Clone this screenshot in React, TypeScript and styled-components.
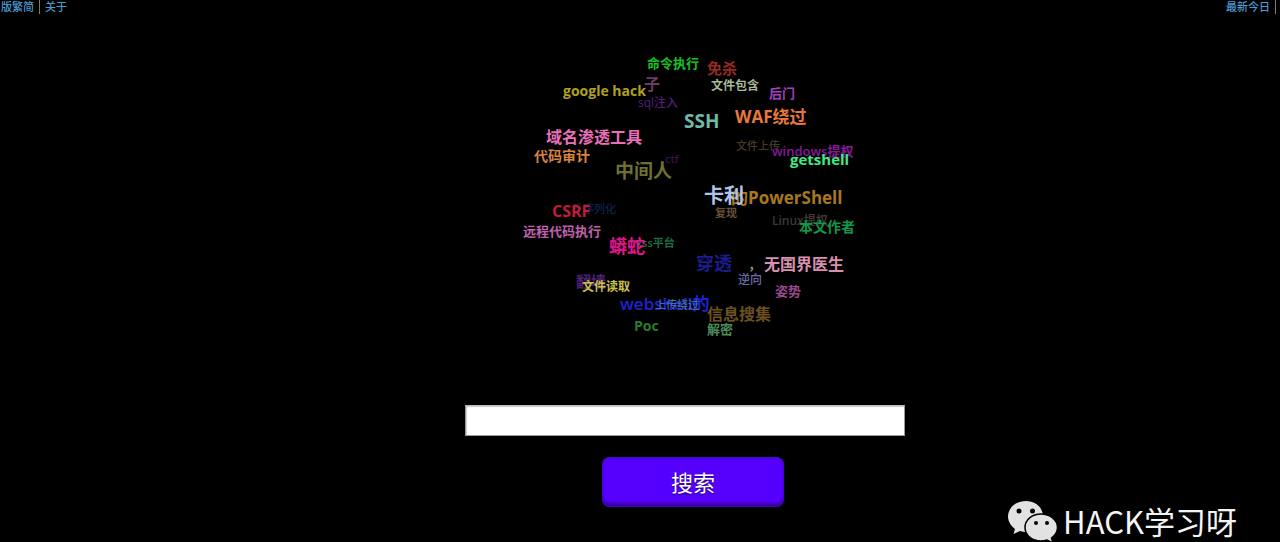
import React from "react";
import styled, { createGlobalStyle } from "styled-components";

const GlobalStyle = createGlobalStyle`
  * { box-sizing: border-box; }
  body {
    margin: 0;
    background: #000;
    font-family: "Open Sans", "Noto Sans CJK SC", sans-serif;
  }
`;

const Page = styled.div`
  position: relative;
  min-height: 100vh;
`;

const TopBar = styled.nav`
  display: flex;
  justify-content: space-between;
  padding: 0 4px 0 1px;
  height: 14px;
`;

const LinkGroup = styled.div`
  display: flex;
  align-items: center;
`;

const TopLink = styled.a`
  color: #4a9ad0;
  font-size: 11px;
  font-weight: 500;
  line-height: 14px;
  text-decoration: none;
`;

const Divider = styled.span`
  width: 1px;
  height: 14px;
  margin: 0 5px;
  background: #8a7468;
  &:last-child { margin-right: 0; }
`;

const Main = styled.main`
  display: flex;
  flex-direction: column;
  align-items: center;
  padding-left: 90px;
`;

const Cloud = styled.div`
  position: relative;
  width: 360px;
  height: 391px;
`;

const Tag = styled.a<{ $x: number; $y: number; $size: number; $color: string; $weight?: number }>`
  position: absolute;
  left: ${(p) => p.$x}px;
  top: ${(p) => p.$y}px;
  height: 24px;
  margin-top: -12px;
  color: ${(p) => p.$color};
  font-size: ${(p) => p.$size}px;
  font-weight: ${(p) => p.$weight ?? 700};
  line-height: 24px;
  white-space: nowrap;
  text-decoration: none;
`;

const SearchForm = styled.form`
  display: flex;
  flex-direction: column;
  align-items: center;
  gap: 21px;
`;

const SearchInput = styled.input`
  width: 440px;
  height: 31px;
  padding: 0 8px;
  border: 1px solid #999;
  border-top-color: #bbb;
  background: #fff;
  box-shadow: inset 1px 1px 1px #ccc;
  font-size: 16px;
`;

const SearchButton = styled.button`
  width: 182px;
  height: 50px;
  margin-left: 16px;
  padding: 0;
  border: 0;
  border-radius: 8px;
  background: #5500ff;
  box-shadow: inset 0 -4px 3px #3c00a8, inset 0 1px 2px #3c10b0;
  color: #fff;
  font-family: inherit;
  font-size: 22px;
  line-height: 32px;
  text-shadow: 0 1px 2px #200060;
`;

/* Watermark that floats over the bottom right corner of the page. */
const Watermark = styled.div`
  position: absolute;
  right: 43px;
  bottom: 0;
  display: flex;
  align-items: center;
  gap: 5px;
`;

const Brand = styled.span`
  color: #f4f4f4;
  font-family: "Noto Sans CJK SC", sans-serif;
  font-size: 31px;
  font-weight: 400;
  line-height: 42px;
`;

interface TagData {
  text: string;
  x: number;
  y: number;
  size: number;
  color: string;
  weight?: number;
}

// Listed from the back of the sphere to the front.
const tags: TagData[] = [
  { text: "ctf", x: 160, y: 145, size: 11, color: "#3a124a", weight: 600 },
  { text: "文件上传", x: 231, y: 132, size: 11, color: "#463c26", weight: 500 },
  { text: "反序列化", x: 67, y: 195, size: 11, color: "#10204e", weight: 500 },
  { text: "Linux提权", x: 267, y: 207, size: 12, color: "#3e3834", weight: 600 },
  { text: "sql注入", x: 133, y: 89, size: 12, color: "#541e7c", weight: 500 },
  { text: "xss平台", x: 131, y: 229, size: 11, color: "#1c7048", weight: 600 },
  { text: "复现", x: 210, y: 199, size: 11, color: "#6a5238" },
  { text: "逆向", x: 233, y: 266, size: 12, color: "#6c6cac", weight: 500 },
  { text: "windows提权", x: 267, y: 137, size: 13, color: "#86189a", weight: 600 },
  { text: "翻墙", x: 71, y: 267, size: 15, color: "#4e2074", weight: 700 },
  { text: "子", x: 139, y: 70, size: 16, color: "#6d3b66" },
  { text: "免杀", x: 202, y: 54, size: 15, color: "#962a22" },
  { text: "后门", x: 264, y: 79, size: 13, color: "#a040c0" },
  { text: "文件包含", x: 206, y: 72, size: 12, color: "#a8b897" },
  { text: "命令执行", x: 142, y: 49, size: 13, color: "#17c11f" },
  { text: "google hack", x: 58, y: 77, size: 14, color: "#b0a020" },
  { text: "SSH", x: 179, y: 107, size: 19, color: "#72b8a8" },
  { text: "WAF绕过", x: 230, y: 103, size: 17, color: "#e8783c" },
  { text: "域名渗透工具", x: 41, y: 123, size: 16, color: "#e870b8" },
  { text: "代码审计", x: 29, y: 142, size: 14, color: "#d88440" },
  { text: "中间人", x: 110, y: 157, size: 19, color: "#6e7030" },
  { text: "getshell", x: 285, y: 145, size: 15, color: "#42e886" },
  { text: "的PowerShell", x: 226, y: 184, size: 17, color: "#a87820" },
  { text: "卡利", x: 199, y: 182, size: 20, color: "#b0c4e8" },
  { text: "CSRF", x: 47, y: 197, size: 16, color: "#c41c34" },
  { text: "远程代码执行", x: 18, y: 217, size: 13, color: "#c060b0" },
  { text: "蟒蛇", x: 104, y: 232, size: 18, color: "#e0148c" },
  { text: "本文作者", x: 294, y: 213, size: 14, color: "#109848" },
  { text: "穿透", x: 191, y: 249, size: 18, color: "#1c1c90" },
  { text: "，", x: 243, y: 250, size: 13, color: "#8c9878" },
  { text: "无国界医生", x: 259, y: 250, size: 16, color: "#d890b0" },
  { text: "姿势", x: 270, y: 277, size: 13, color: "#9c4890" },
  { text: "文件读取", x: 77, y: 273, size: 12, color: "#c8c048" },
  { text: "webshell的", x: 115, y: 290, size: 17, color: "#2020d8", weight: 600 },
  { text: "上传绕过", x: 150, y: 291, size: 11, color: "#4070a8", weight: 500 },
  { text: "Poc", x: 129, y: 312, size: 14, color: "#2a7a30" },
  { text: "信息搜集", x: 202, y: 300, size: 16, color: "#6c5020" },
  { text: "解密", x: 202, y: 315, size: 13, color: "#4c8c5c" },
];

const ChatLogo = () => (
  <svg width="50" height="42" viewBox="0 0 50 42" aria-hidden="true">
    <path fill="#e2e2e2" d="M18 1C8 1 0 8 0 16.500C0 21.500 3 26 7 29L5.500 34L12 31Q15 32 18 32C28 32 35 25 35 16.500S28 1 18 1Z" />
    <path fill="#e2e2e2" stroke="#000" strokeWidth="1.500" d="M33 14C24 14 17 20 17 27.500S24 41 33 41Q36 41 39 40L45 43L43.500 38C47 35.500 49.500 32 49.500 27.500C49.500 20 42 14 33 14Z" />
    <g fill="#000">
      <circle cx="11" cy="11" r="2.500" />
      <circle cx="24.500" cy="11" r="2.500" />
      <circle cx="28" cy="23" r="2" />
      <circle cx="39" cy="23" r="2" />
    </g>
  </svg>
);

export default function App() {
  return (
    <>
      <GlobalStyle />
      <Page>
        <TopBar>
          <LinkGroup>
            <TopLink href="#lang">版繁简</TopLink>
            <Divider />
            <TopLink href="#about">关于</TopLink>
          </LinkGroup>
          <LinkGroup>
            <TopLink href="#today">最新今日</TopLink>
            <Divider />
          </LinkGroup>
        </TopBar>
        <Main>
          <Cloud>
            {tags.map((t) => (
              <Tag key={t.text} href="#tag" $x={t.x} $y={t.y} $size={t.size} $color={t.color} $weight={t.weight}>
                {t.text}
              </Tag>
            ))}
          </Cloud>
          <SearchForm onSubmit={(e) => e.preventDefault()}>
            <SearchInput type="text" aria-label="搜索" />
            <SearchButton type="submit">搜索</SearchButton>
          </SearchForm>
        </Main>
        <Watermark>
          <ChatLogo />
          <Brand>HACK学习呀</Brand>
        </Watermark>
      </Page>
    </>
  );
}
